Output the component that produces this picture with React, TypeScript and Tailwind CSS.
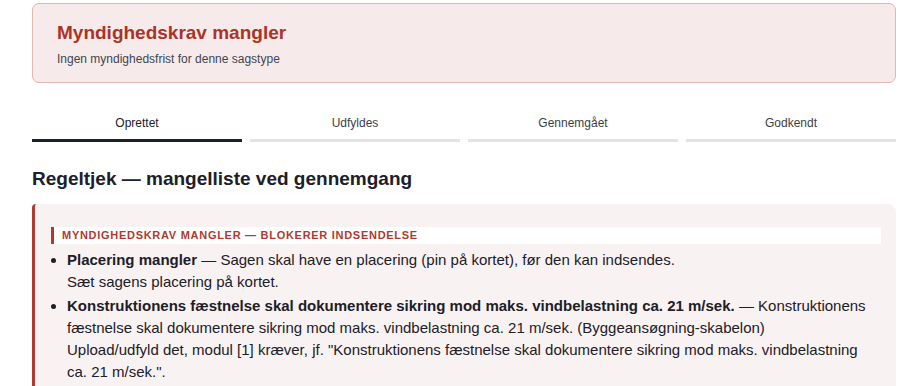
import React from "react";

const tabs = ["Oprettet", "Udfyldes", "Gennemgået", "Godkendt"];

export default function App() {
  return (
    <div
      className="bg-white pl-8 pr-1 pt-[3px] min-h-[386px] text-[#1f2328]"
      style={{ fontFamily: '"Liberation Sans", Arial, sans-serif' }}
    >
      <div className="rounded-[7px] border border-[#e2b7b1] bg-[#f7eaea] px-6 pt-[17px] pb-[15px]">
        <div className="text-[19px] leading-6 font-bold text-[#ab3428]">Myndighedskrav mangler</div>
        <div className="mt-[6px] text-xs leading-4 text-[#3f4550]">Ingen myndighedsfrist for denne sagstype</div>
      </div>

      <div className="mt-[32px] grid grid-cols-4 gap-2">
        {tabs.map((t, i) => (
          <div
            key={t}
            className={
              "pb-2 text-center text-xs leading-4 border-b-[3px] " +
              (i === 0 ? "border-[#1c2028] text-[#1c2028]" : "border-[#e3e3e3] text-[#3a3f47]")
            }
          >
            {t}
          </div>
        ))}
      </div>

      <h2 className="mt-[23px] text-[19px] leading-7 font-bold text-[#1c2028]">
        Regeltjek — mangelliste ved gennemgang
      </h2>

      <div className="mt-[11px] rounded-r-[8px] rounded-l-[4px] border-l-[3px] border-[#b03a2e] bg-[#f9f2f2] pl-4 pr-[15px] pt-[23px] pb-4">
        <div className="border-l-[3px] border-[#b03a2e] bg-white pl-2 text-[11px] leading-[17px] font-bold uppercase tracking-[0.065em] text-[#b03a2e]">
          Myndighedskrav mangler — blokerer indsendelse
        </div>
        <ul className="mt-[5px] list-disc pl-4 text-[15px] leading-[22px] text-[#1c2028]">
          <li>
            <b>Placering mangler</b> — Sagen skal have en placering (pin på kortet), før den kan indsendes.
            <br />
            Sæt sagens placering på kortet.
          </li>
          <li className="mt-[2px]">
            <b>Konstruktionens fæstnelse skal dokumentere sikring mod maks. vindbelastning ca. 21 m/sek.</b> —
            Konstruktionens fæstnelse skal dokumentere sikring mod maks. vindbelastning ca. 21 m/sek.
            (Byggeansøgning-skabelon)
            <br />
            Upload/udfyld det, modul [1] kræver, jf. "Konstruktionens fæstnelse skal dokumentere sikring mod maks.
            vindbelastning ca. 21 m/sek.".
          </li>
        </ul>
      </div>
    </div>
  );
}
